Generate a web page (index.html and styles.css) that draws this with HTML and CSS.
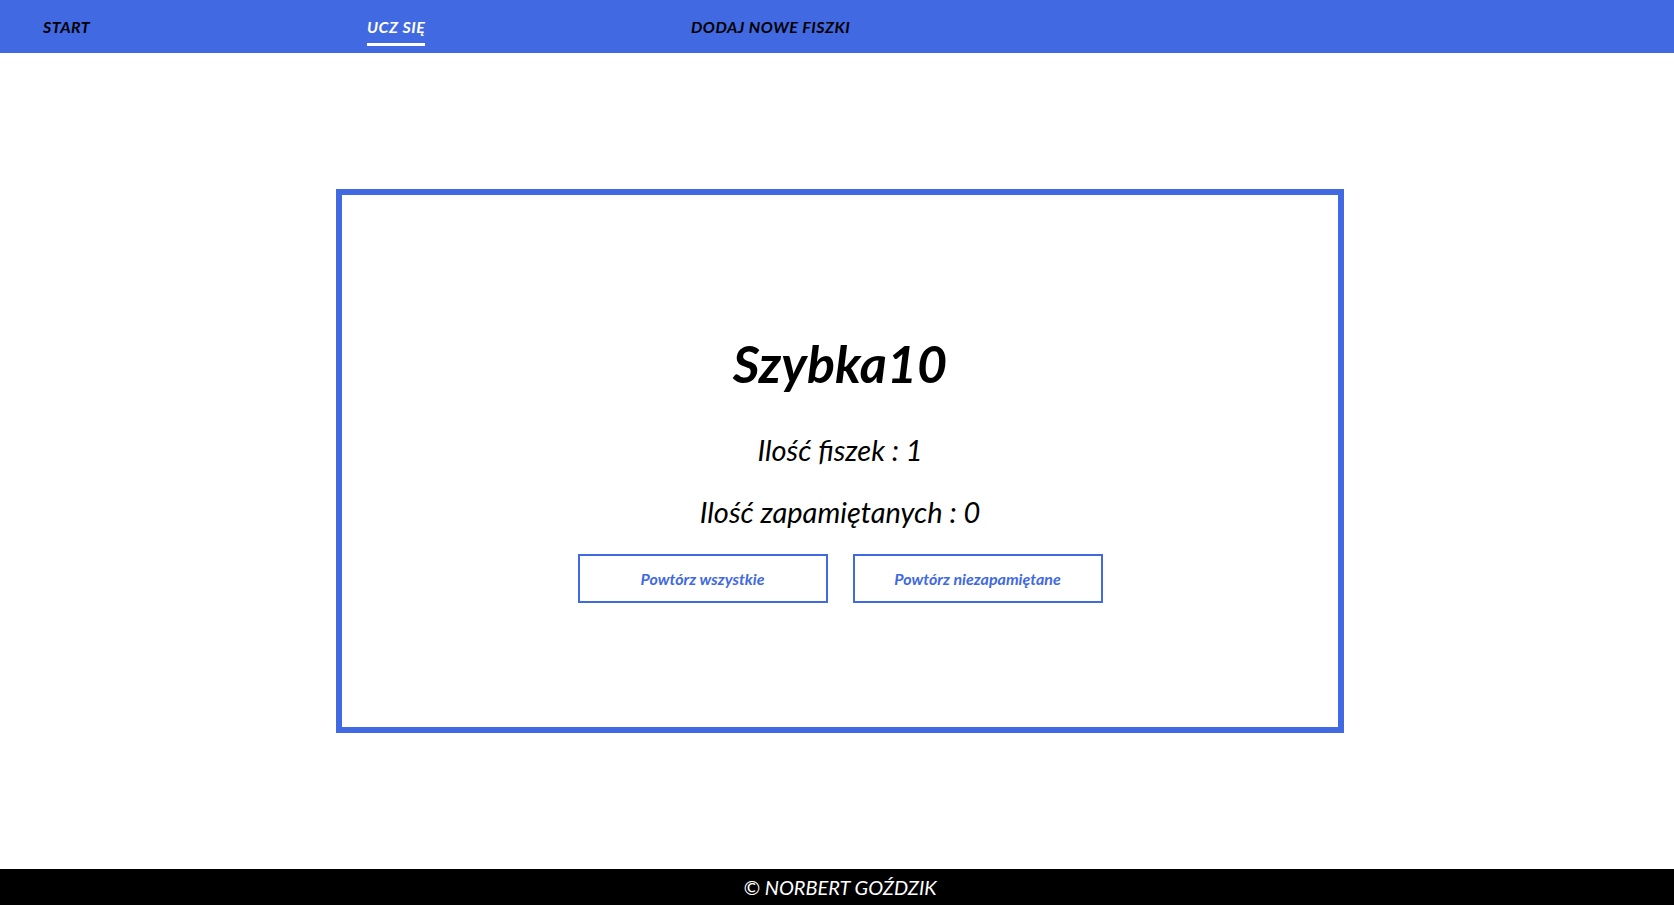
FILE: index.html
```html
<!DOCTYPE html>
<html lang="pl">
<head>
<meta charset="utf-8">
<title>Szybka10</title>
<link rel="stylesheet" href="styles.css">
</head>
<body>
<header class="topbar">
  <nav>
    <ul class="menu">
      <li class="menu-item"><a class="menu-link" href="#">Start</a></li>
      <li class="menu-item"><a class="menu-link menu-link--active" href="#">Ucz się</a></li>
      <li class="menu-item"><a class="menu-link" href="#">Dodaj nowe fiszki</a></li>
    </ul>
  </nav>
</header>
<main class="content">
  <section class="card">
    <h1 class="card-title">Szybka10</h1>
    <p class="card-stat">Ilość fiszek : 1</p>
    <p class="card-stat card-stat--second">Ilość zapamiętanych : 0</p>
    <div class="card-actions">
      <button class="btn" type="button">Powtórz wszystkie</button>
      <button class="btn" type="button">Powtórz niezapamiętane</button>
    </div>
  </section>
</main>
<footer class="footer">© Norbert Goździk</footer>
</body>
</html>
```
FILE: styles.css
```css
* { box-sizing: border-box; }
html, body { margin: 0; padding: 0; }
body {
  font-family: "Lato", "Noto Sans", sans-serif;
  background: #fff;
  color: #000;
  min-height: 100vh;
  display: flex;
  flex-direction: column;
}
.topbar {
  background: #4169e1;
  height: 53px;
}
.menu {
  list-style: none;
  margin: 0;
  padding: 0 0 0 43px;
  display: flex;
}
.menu-item {
  width: 324px;
  padding-top: 17px;
}
.menu-link {
  display: inline-block;
  font-size: 16px;
  line-height: 18px;
  font-weight: 700;
  font-style: italic;
  text-transform: uppercase;
  color: #000;
  text-decoration: none;
  letter-spacing: 0.5px;
}
.menu-link--active {
  color: #fff;
  border-bottom: 3px solid #fff;
  padding-bottom: 7px;
}
.content {
  padding-left: 6px;
  padding-top: 136px;
}
.card {
  width: 1008px;
  height: 544px;
  margin: 0 auto;
  border: 6px solid #4169e1;
  display: flex;
  flex-direction: column;
  align-items: center;
  padding-top: 137px;
}
.card-title {
  margin: 0;
  font-size: 52px;
  line-height: 62px;
  font-weight: 700;
  font-style: italic;
}
.card-stat {
  margin: 38px 0 0;
  font-size: 29px;
  line-height: 35px;
  font-style: italic;
  font-weight: 400;
}
.card-stat--second {
  margin-top: 27px;
}
.card-actions {
  display: flex;
  gap: 25px;
  margin-top: 25px;
}
.btn {
  width: 250px;
  height: 49px;
  background: #fff;
  border: 2px solid #4169e1;
  color: #4169e1;
  font-family: "Lato", "Noto Sans", sans-serif;
  font-size: 16px;
  font-weight: 700;
  font-style: italic;
  cursor: pointer;
}
.footer {
  margin-top: auto;
  height: 36px;
  background: #000;
  color: #fff;
  text-align: center;
  font-size: 20px;
  line-height: 36px;
  font-style: italic;
  text-transform: uppercase;
  padding-left: 6px;
}
```
